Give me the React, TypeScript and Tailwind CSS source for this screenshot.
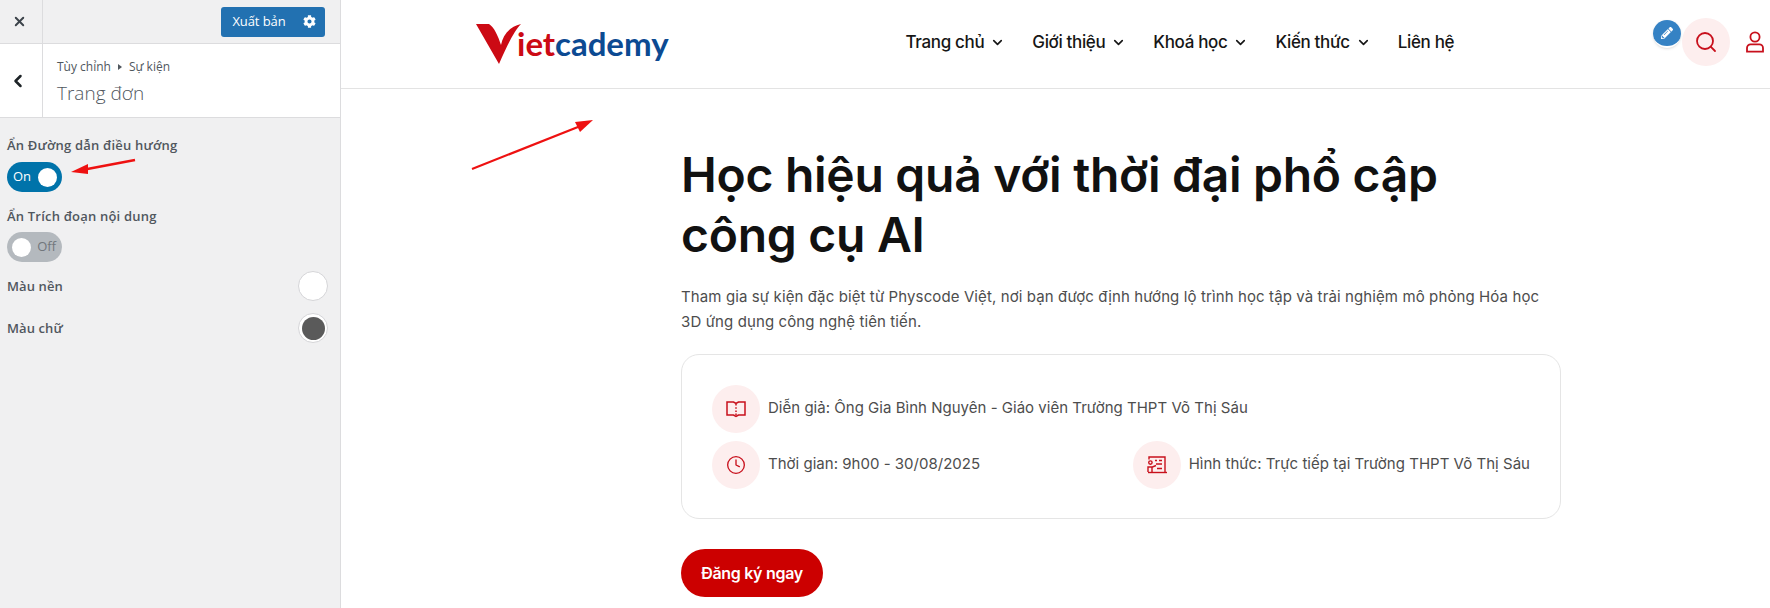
import { ChevronDown, ChevronLeft, Clock, Search, X } from "lucide-react";
import { FaCog, FaPencilAlt } from "react-icons/fa";

const navItems = [
  { label: "Trang chủ", caret: true },
  { label: "Giới thiệu", caret: true },
  { label: "Khoá học", caret: true },
  { label: "Kiến thức", caret: true },
  { label: "Liên hệ", caret: false },
];

function Toggle({ on }: { on: boolean }) {
  if (on) {
    return (
      <div className="flex h-[30px] w-[55px] items-center justify-between rounded-full bg-[#0073aa] pl-[6px] pr-[5px] text-[13px] text-white">
        <span>On</span>
        <span className="h-[19px] w-[19px] rounded-full bg-white" />
      </div>
    );
  }
  return (
    <div className="flex h-[30px] w-[55px] items-center justify-between rounded-full bg-[#b4b9be] pl-[5px] pr-[6px] text-[13px] text-[#72777c]">
      <span className="h-[19px] w-[19px] rounded-full bg-white" />
      <span>Off</span>
    </div>
  );
}

function Swatch({ color, label }: { color: string; label: string }) {
  return (
    <div className="flex h-[30px] items-center justify-between">
      <span className="pt-[1px] text-[13px] font-semibold tracking-[0.1px] text-[#50575e]">{label}</span>
      <span className="flex h-[30px] w-[30px] items-center justify-center rounded-full border border-[#d5d5d8] bg-white">
        <span className="h-[23px] w-[23px] rounded-full" style={{ backgroundColor: color }} />
      </span>
    </div>
  );
}

function Sidebar() {
  return (
    <aside className="h-[608px] w-[341px] shrink-0 border-r border-[#dcdcde] bg-[#f0f0f1] font-['Open_Sans',sans-serif]">
      <div className="flex h-[44px] items-center justify-between border-b border-[#dcdcde] pr-[15px]">
        <div className="flex h-full w-[43px] items-center justify-center border-r border-[#dcdcde] pr-[4px]">
          <X size={15} strokeWidth={3} className="text-[#3c434a]" />
        </div>
        <div className="flex h-[30px] w-[104px] items-center rounded-[3px] bg-[#2271b1] text-white">
          <span className="w-[75px] pl-[1px] text-center text-[13px] tracking-[-0.1px]">Xuất bản</span>
          <FaCog size={13} className="ml-[7px]" />
        </div>
      </div>
      <div className="flex h-[74px] border-b border-[#dcdcde] bg-white">
        <div className="flex w-[43px] items-center justify-center border-r border-[#dcdcde] pr-[6px]">
          <ChevronLeft size={20} strokeWidth={3} className="text-[#1d2327]" />
        </div>
        <div className="pl-[14px] pt-[14px] text-[#50575e]">
          <div className="flex items-center text-[12px] leading-[18px]">
            Tùy chỉnh
            <span className="mx-[7px] h-0 w-0 border-y-[3px] border-l-[4px] border-y-transparent border-l-[#50575e]" />
            Sự kiện
          </div>
          <div className="mt-[4px] text-[19px] font-light leading-[27px]">Trang đơn</div>
        </div>
      </div>
      <div className="pl-[7px] pr-[12px] pt-[17px]">
        <div className="text-[13px] font-semibold leading-[20px] tracking-[0.2px] text-[#50575e]">Ẩn Đường dẫn điều hướng</div>
        <div className="mt-[7px]">
          <Toggle on />
        </div>
        <div className="mt-[14px] text-[13px] font-semibold leading-[20px] tracking-[0.2px] text-[#50575e]">Ẩn Trích đoạn nội dung</div>
        <div className="mt-[6px]">
          <Toggle on={false} />
        </div>
        <div className="mt-[9px] flex flex-col gap-[12px]">
          <Swatch color="#ffffff" label="Màu nền" />
          <Swatch color="#5a5a5a" label="Màu chữ" />
        </div>
      </div>
    </aside>
  );
}

function Logo() {
  return (
    <div className="flex items-end">
      <svg width="46" height="40" viewBox="0 0 46 40" className="shrink-0">
        <path d="M0 0H13C18 3 22 12 25 21C27 11 33 3 45 0C38 7 31 22 23 40Z" fill="#cc0a14" />
      </svg>
      <span className="-ml-[5px] mb-[4px] font-['Lato',sans-serif] text-[33px] font-bold leading-[34px]">
        <span className="text-[#cc0a14]">iet</span>
        <span className="text-[#0c4a92]">cademy</span>
      </span>
    </div>
  );
}

function Header() {
  return (
    <header className="relative flex h-[89px] items-center border-b border-[#e3e3e3] bg-white pl-[135px]">
      <Logo />
      <nav className="mb-[3px] ml-[237px] flex items-center gap-[27px] text-[17px] font-medium tracking-[-0.35px] text-[#161616]">
        {navItems.map((item) => (
          <div key={item.label} className="flex items-center gap-[6px]">
            <span>{item.label}</span>
            {item.caret && <ChevronDown size={15} strokeWidth={2.6} />}
          </div>
        ))}
      </nav>
      <div className="absolute left-[1341px] top-[18px] flex h-[48px] w-[48px] items-center justify-center rounded-full bg-[#fdeeee]">
        <Search size={24} strokeWidth={1.8} className="text-[#c8101c]" />
      </div>
      <div className="absolute left-[1312px] top-[20px] flex h-[28px] w-[28px] items-center justify-center rounded-full border-b-2 border-white bg-[#3582c4] shadow-sm">
        <FaPencilAlt size={12} className="text-white" />
      </div>
      <svg width="20" height="22" viewBox="0 0 20 22" fill="none" stroke="#c8101c" strokeWidth="1.8" className="absolute left-[1404px] top-[31px]">
        <circle cx="10" cy="6" r="4.6" />
        <path d="M2 20.6V17a3.6 3.6 0 0 1 3.6-3.6h8.8A3.6 3.6 0 0 1 18 17v3.6Z" />
      </svg>
    </header>
  );
}

function BookIcon() {
  return (
    <svg width="20" height="18" viewBox="0 0 20 18" fill="none" stroke="#c8101c" strokeWidth="1.5">
      <path d="M1 2h6.5L10 3.5 12.5 2H19v13h-6.5L10 16.5 7.5 15H1Z" />
      <path d="M10 4v11" strokeDasharray="1.6 1.6" />
    </svg>
  );
}

function BoardIcon() {
  return (
    <svg width="20" height="18" viewBox="0 0 20 18" fill="none" stroke="#c8101c" strokeWidth="1.4">
      <path d="M2 3.5V1h16v15" />
      <path d="M1 16.5h19" />
      <circle cx="3.4" cy="6.6" r="1.7" />
      <path d="M1 16V11h4.5L9 9.5M5 11.5V16M8 4.5h2M12 4.5h3M9 8h6M10 12.5h5" />
    </svg>
  );
}

function InfoItem({ icon, text }: { icon: React.ReactNode; text: string }) {
  return (
    <div className="flex items-center gap-[8px]">
      <span className="flex h-[48px] w-[48px] shrink-0 items-center justify-center rounded-full bg-[#fdeeee]">{icon}</span>
      <span className="whitespace-nowrap text-[15px] tracking-[0.02px] text-[#4d4d4d]">{text}</span>
    </div>
  );
}

export default function App() {
  return (
    <div className="relative flex h-[608px] w-[1770px] overflow-hidden bg-white font-['Inter',sans-serif]">
      <Sidebar />
      <main className="min-w-0 flex-1">
        <Header />
        <section className="ml-[340px] w-[880px] pt-[56px]">
          <h1 className="text-[48px] font-semibold leading-[60px] tracking-[-0.28px] text-[#111111]">
            Học hiệu quả với thời đại phổ cập
            <br />
            công cụ AI
          </h1>
          <p className="mt-[19px] text-[15px] leading-[25px] tracking-[0.11px] text-[#4d4d4d]">
            Tham gia sự kiện đặc biệt từ Physcode Việt, nơi bạn được định hướng lộ trình học tập và trải nghiệm mô phỏng Hóa học
            <br />
            3D ứng dụng công nghệ tiên tiến.
          </p>
          <div className="mt-[20px] flex h-[165px] flex-col justify-center gap-[8px] rounded-[18px] border border-[#e5e5e5] px-[30px]">
            <InfoItem icon={<BookIcon />} text="Diễn giả: Ông Gia Bình Nguyên - Giáo viên Trường THPT Võ Thị Sáu" />
            <div className="flex items-center justify-between">
              <InfoItem icon={<Clock size={20} strokeWidth={1.6} className="text-[#c8101c]" />} text="Thời gian: 9h00 - 30/08/2025" />
              <InfoItem icon={<BoardIcon />} text="Hình thức: Trực tiếp tại Trường THPT Võ Thị Sáu" />
            </div>
          </div>
          <button className="mt-[30px] h-[48px] w-[142px] rounded-full bg-[#cc0000] text-[16px] font-semibold tracking-[-0.3px] text-white">
            Đăng ký ngay
          </button>
        </section>
      </main>
      {/* red annotation arrows drawn over the screenshot */}
      <svg width="180" height="70" viewBox="0 0 180 70" className="absolute left-[60px] top-[150px]">
        <path d="M75 10 L22 20" stroke="#ee1111" strokeWidth="2.5" />
        <path d="M11 22 L28 14 L28 24 Z" fill="#ee1111" />
      </svg>
      <svg width="140" height="70" viewBox="0 0 140 70" className="absolute left-[465px] top-[112px]">
        <path d="M7 57 L118 13" stroke="#ee1111" strokeWidth="2.2" />
        <path d="M128 8 L110 10 L115 20 Z" fill="#ee1111" />
      </svg>
    </div>
  );
}
